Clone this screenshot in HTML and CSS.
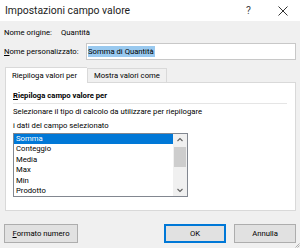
FILE: index.html
```html
<!DOCTYPE html>
<html lang="it">
<head>
  <meta charset="UTF-8">
  <title>Impostazioni campo valore</title>
  <link rel="stylesheet" href="styles.css">
</head>
<body>

  <div class="titlebar">
    <span class="title">Impostazioni campo valore</span>
    <span class="help">?</span>
    <svg class="close" width="10" height="10" viewBox="0 0 10 10">
      <path d="M0.5 0.5 L9.5 9.5 M9.5 0.5 L0.5 9.5" stroke="#333" stroke-width="1" fill="none"/>
    </svg>
  </div>

  <div class="content">
    <div class="row">
      <span class="label">Nome origine:</span>
      <span class="value">Quantità</span>
    </div>

    <div class="row name-row">
      <label class="label"><u>N</u>ome personalizzato:</label>
      <div class="textbox"><span class="sel">Somma di Quantità</span></div>
    </div>

    <div class="tabs">
      <div class="tab active">Riepiloga valori per</div>
      <div class="tab">Mostra valori come</div>
    </div>

    <div class="panel">
      <div class="heading"><u>R</u>iepiloga campo valore per</div>
      <p class="hint first">Selezionare il tipo di calcolo da utilizzare per riepilogare</p>
      <p class="hint">i dati del campo selezionato</p>

      <div class="listbox">
        <ul class="items">
          <li class="selected">Somma</li>
          <li>Conteggio</li>
          <li>Media</li>
          <li>Max</li>
          <li>Min</li>
          <li>Prodotto</li>
        </ul>
        <div class="scrollbar">
          <svg class="arrow" width="14" height="12" viewBox="0 0 14 12">
            <path d="M4.5 7 L7 4.5 L9.5 7" stroke="#606060" stroke-width="1.1" fill="none"/>
          </svg>
          <div class="track"><div class="thumb"></div></div>
          <svg class="arrow" width="14" height="12" viewBox="0 0 14 12">
            <path d="M4.5 5 L7 7.5 L9.5 5" stroke="#606060" stroke-width="1.1" fill="none"/>
          </svg>
        </div>
      </div>
    </div>

    <div class="footer">
      <button class="btn wide"><u>F</u>ormato numero</button>
      <span class="spacer"></span>
      <button class="btn default">OK</button>
      <button class="btn">Annulla</button>
    </div>
  </div>

  <svg class="grip" width="6" height="6" viewBox="0 0 6 6">
    <path d="M5.5 1.5 L1.5 5.5 M5.5 3.5 L3.5 5.5" stroke="#9a9a9a" stroke-width="0.8" fill="none"/>
  </svg>

</body>
</html>
```

FILE: styles.css
```css
* {
  box-sizing: border-box;
}

body {
  margin: 0;
  width: 300px;
  height: 248px;
  background-color: #f0f0f0;
  font-family: Roboto, "Open Sans", sans-serif;
  font-size: 7.7px;
  color: #000;
  position: relative;
  overflow: hidden;
  white-space: nowrap;
}

u {
  text-decoration: underline;
  text-underline-offset: 1px;
}

.titlebar {
  height: 21px;
  background-color: #fff;
  display: flex;
  align-items: center;
  padding: 0 12px 0 5px;
}

.title {
  font-size: 10.4px;
  color: #222;
  flex: 1;
}

.help {
  font-size: 10.4px;
  color: #444;
  margin-right: 27px;
}

.content {
  padding: 0 4px 0 4px;
}

.row {
  display: flex;
  align-items: center;
  height: 17px;
  margin-top: 3px;
}

.row .label {
  width: 57px;
}

.name-row {
  margin-top: 2px;
  height: 17px;
}

.name-row .label {
  width: 82px;
}

.textbox {
  flex: 1;
  height: 17px;
  background-color: #fff;
  border: 1px solid #c8c8c8;
  display: flex;
  align-items: center;
  padding-left: 1px;
}

.sel {
  background-color: #99c9ef;
  line-height: 11px;
  padding-right: 1px;
}

/* Tabs */
.tabs {
  display: flex;
  align-items: flex-end;
  margin-top: 7px;
  padding-left: 1px;
  height: 15px;
}

.tab {
  height: 14px;
  line-height: 13px;
  padding: 0 6px;
  border: 1px solid #d9d9d9;
  border-bottom: none;
  background-color: #f0f0f0;
  width: 80px;
}

.tab.active {
  height: 16px;
  line-height: 15px;
  background-color: #fff;
  width: 82px;
  position: relative;
  z-index: 1;
  margin-bottom: -1px;
  border-right: none;
}

.panel {
  margin-left: 1px;
  height: 129px;
  background-color: #fff;
  border: 1px solid #d9d9d9;
  padding: 0 8px 0 7px;
}

.heading {
  font-weight: bold;
  padding: 6px 0 1px 0;
  border-bottom: 1px solid #e5e5e5;
  line-height: 13px;
}

.hint {
  margin: 0;
  line-height: 14px;
}

.hint.first {
  margin-top: 1px;
}

/* List box */
.listbox {
  margin-top: 0;
  width: 175px;
  height: 64px;
  border: 1px solid #828790;
  display: flex;
  background-color: #fff;
}

.items {
  list-style: none;
  margin: 0;
  padding: 0;
  flex: 1;
}

.items li {
  height: 10.4px;
  line-height: 10.4px;
  padding-left: 2px;
}

.items li.selected {
  background-color: #0078d7;
  color: #fff;
}

.scrollbar {
  width: 14px;
  background-color: #f0f0f0;
  display: flex;
  flex-direction: column;
}

.arrow {
  display: block;
  flex: none;
}

.track {
  flex: 1;
}

.thumb {
  height: 20px;
  margin: 1px 1px 0 1px;
  background-color: #cdcdcd;
}

/* Buttons */
.footer {
  display: flex;
  margin-top: 13px;
  gap: 8px;
}

.spacer {
  flex: 1;
}

.btn {
  font-family: inherit;
  font-size: 7.7px;
  height: 19px;
  width: 62px;
  padding: 0;
  background-color: #e1e1e1;
  border: 1px solid #adadad;
  color: #000;
}

.btn.wide {
  width: 74px;
}

.btn.default {
  border: 1px solid #0078d7;
  box-shadow: inset 0 0 0 1px #0078d7;
}

.grip {
  position: absolute;
  right: 0;
  bottom: 0;
}
```
